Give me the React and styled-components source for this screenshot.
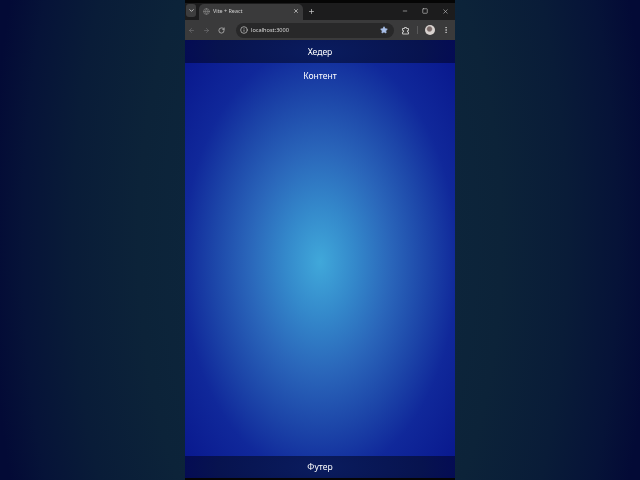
import React from "react";
import styled, { createGlobalStyle } from "styled-components";
import { ArrowLeft, ArrowRight, RotateCw, X, Plus, Minus, Square, ChevronDown, Info, Star, EllipsisVertical, Globe } from "lucide-react";

const Global = createGlobalStyle`
  html, body { margin: 0; padding: 0; width: 640px; height: 480px; overflow: hidden; background: #071a33; }
  #root { width: 640px; height: 480px; }
  * { box-sizing: border-box; }
`;

const Stage = styled.div`
  width: 640px;
  height: 480px;
  display: flex;
  justify-content: center;
  background: radial-gradient(ellipse 330px 700px at 50% 50%, #0e2a40 0%, #0c2339 55%, #091c38 75%, #061338 90%, #030a36 100%);
  font-family: "Noto Sans", "Inter", sans-serif;
`;

const Phone = styled.div`
  width: 270px;
  height: 480px;
  display: flex;
  flex-direction: column;
  background: #050505;
  padding-top: 3px;
  padding-bottom: 2px;
`;

const BrowserChrome = styled.div`
  flex: none;
  display: flex;
  flex-direction: column;
  filter: blur(0.35px);
`;

const TabStrip = styled.div`
  height: 17px;
  flex: none;
  display: flex;
  align-items: flex-end;
  background: #1c1c1d;
  color: #c8c8c8;
`;

const TabMenu = styled.div`
  width: 10px;
  height: 13px;
  margin: 0 3px 3px 1px;
  border-radius: 3px;
  background: #3d3d3e;
  display: flex;
  align-items: center;
  justify-content: center;
  flex: none;
`;

const Tab = styled.div`
  width: 104px;
  height: 16px;
  flex: none;
  background: #3a3a3b;
  border-radius: 5px 5px 0 0;
  display: flex;
  align-items: center;
  padding: 0 4px 2px 4px;
  gap: 3px;
`;

const TabTitle = styled.span`
  flex: 1;
  font-size: 5.4px;
  line-height: 8px;
  color: #d0d0d0;
  white-space: nowrap;
`;

const NewTab = styled.div`
  width: 16px;
  height: 16px;
  padding-bottom: 2px;
  display: flex;
  align-items: center;
  justify-content: center;
  flex: none;
`;

const WindowControls = styled.div`
  margin-left: auto;
  height: 16px;
  padding: 0 6px 2px 0;
  display: flex;
  align-items: center;
  gap: 14px;
`;

const Toolbar = styled.div`
  height: 20px;
  flex: none;
  display: flex;
  align-items: center;
  background: #3a3a3b;
  padding: 0 5px 0 3px;
  color: #c4c4c4;
`;

const NavGroup = styled.div`
  display: flex;
  align-items: center;
  gap: 8px;
  margin-right: 11px;
`;

const Omnibox = styled.div`
  width: 158px;
  height: 15px;
  flex: none;
  border-radius: 8px;
  background: #282829;
  display: flex;
  align-items: center;
  padding: 0 6px 0 4px;
  gap: 3px;
`;

const Url = styled.span`
  flex: 1;
  font-size: 5.6px;
  line-height: 8px;
  color: #d8d8d8;
`;

const ToolActions = styled.div`
  margin-left: auto;
  display: flex;
  align-items: center;
  gap: 7px;
`;

const Divider = styled.div`
  width: 1px;
  height: 8px;
  background: #5a5a5b;
`;

const Avatar = styled.div`
  width: 10px;
  height: 10px;
  border-radius: 50%;
  background: radial-gradient(circle at 45% 40%, #7a6a68 0 24%, #d8d2cf 40% 100%);
`;

const Page = styled.div`
  flex: 1;
  min-height: 0;
  display: flex;
  flex-direction: column;
  color: #fff;
  text-align: center;
  font-size: 8.6px;
  background: radial-gradient(ellipse 191px 300px at 50% 222px, #40a8da 0%, #3489cb 18%, #2a66ba 37%, #1c45a8 56%, #10289a 72%, #08168c 100%);
`;

const Bar = styled.div`
  height: ${(p) => p.$h}px;
  flex: none;
  display: flex;
  align-items: center;
  justify-content: center;
  padding-top: ${(p) => p.$pad}px;
  background: radial-gradient(ellipse 170px 60px at 50% 50%, #0a1c5e 0%, #07134f 60%, #020558 100%);
`;

const Label = styled.span`
  display: inline-block;
  filter: blur(0.25px);
`;

const Main = styled.div`
  flex: 1;
  min-height: 0;
  padding-top: 7px;
  line-height: 12px;
`;

const ExtensionIcon = () => (
  <svg width="9" height="9" viewBox="0 0 9 9" fill="none" stroke="#c4c4c4" strokeWidth="1">
    <path d="M1.5 2.5h2v-1h2v1h2v2h-1v1.5h1v2h-6v-2h1v-1.5h-1z" />
  </svg>
);

export default function App() {
  return (
    <>
      <Global />
      <Stage>
        <Phone>
          <BrowserChrome>
            <TabStrip>
              <TabMenu><ChevronDown size={7} strokeWidth={3} /></TabMenu>
              <Tab>
                <Globe size={7} color="#8e8e8e" />
                <TabTitle>Vite + React</TabTitle>
                <X size={6} strokeWidth={3} />
              </Tab>
              <NewTab><Plus size={7} strokeWidth={2.5} /></NewTab>
              <WindowControls>
                <Minus size={6} strokeWidth={2.5} />
                <Square size={6} strokeWidth={2.5} />
                <X size={7} strokeWidth={2} />
              </WindowControls>
            </TabStrip>
            <Toolbar>
              <NavGroup>
                <ArrowLeft size={7} color="#77777a" />
                <ArrowRight size={7} color="#77777a" />
                <RotateCw size={7} strokeWidth={2.5} />
              </NavGroup>
              <Omnibox>
                <Info size={8} strokeWidth={2.2} />
                <Url>localhost:3000</Url>
                <Star size={8} fill="#a9c0ea" color="#a9c0ea" />
              </Omnibox>
              <ToolActions>
                <ExtensionIcon />
                <Divider />
                <Avatar />
                <EllipsisVertical size={8} strokeWidth={2.5} />
              </ToolActions>
            </Toolbar>
          </BrowserChrome>
          <Page>
            <Bar $h={23} $pad={1}><Label>Хедер</Label></Bar>
            <Main><Label>Контент</Label></Main>
            <Bar $h={22} $pad={0}><Label>Футер</Label></Bar>
          </Page>
        </Phone>
      </Stage>
    </>
  );
}
